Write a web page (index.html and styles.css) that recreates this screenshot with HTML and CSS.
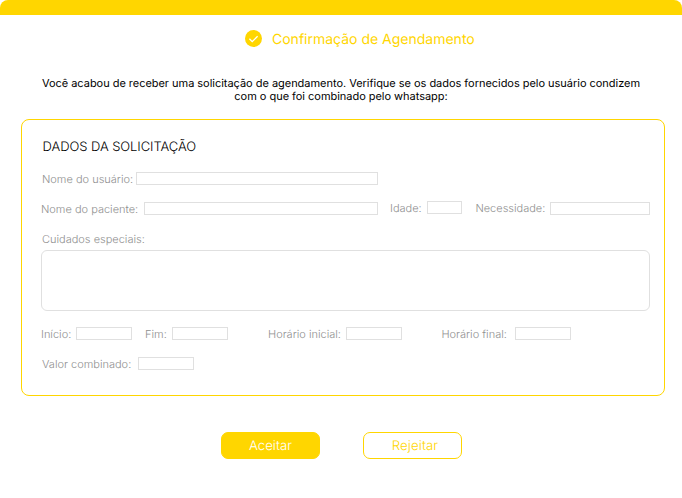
FILE: index.html
```html
<!DOCTYPE html>
<html lang="pt-BR">
<head>
<meta charset="utf-8">
<title>Confirmação de Agendamento</title>
<link rel="stylesheet" href="styles.css">
</head>
<body>
<main class="modal">
  <div class="topbar"></div>
  <header class="heading">
    <svg class="check" viewBox="0 0 17 17" aria-hidden="true">
      <circle cx="8.5" cy="8.5" r="8.5" fill="#ffd600"/>
      <path d="M4.4 8.8l2.8 2.8 5.4-5.4" fill="none" stroke="#fff" stroke-width="1.3"/>
    </svg>
    <h1 class="title">Confirmação de Agendamento</h1>
  </header>
  <p class="intro">Você acabou de receber uma solicitação de agendamento. Verifique se os dados fornecidos pelo usuário condizem<br>com o que foi combinado pelo whatsapp:</p>
  <section class="card">
    <h2 class="card-title">DADOS DA SOLICITAÇÃO</h2>
    <div class="row row-user">
      <span class="label">Nome do usuário:</span><span class="box"></span>
    </div>
    <div class="row row-patient">
      <span class="label">Nome do paciente:</span><span class="box"></span>
      <span class="label raised">Idade:</span><span class="box raised"></span>
      <span class="label raised">Necessidade:</span><span class="box"></span>
    </div>
    <div class="row row-care"><span class="label">Cuidados especiais:</span></div>
    <div class="area"></div>
    <div class="row row-dates">
      <span class="label">Início:</span><span class="box"></span>
      <span class="label">Fim:</span><span class="box"></span>
      <span class="label">Horário inicial:</span><span class="box"></span>
      <span class="label">Horário final:</span><span class="box"></span>
    </div>
    <div class="row row-value">
      <span class="label">Valor combinado:</span><span class="box"></span>
    </div>
  </section>
  <div class="actions">
    <button class="btn btn-accept">Aceitar</button>
    <button class="btn btn-reject">Rejeitar</button>
  </div>
</main>
</body>
</html>
```
FILE: styles.css
```css
* { box-sizing: border-box; }
body {
  margin: 0;
  background: #fff;
  font-family: Inter, "Liberation Sans", sans-serif;
  text-rendering: geometricPrecision;
}
.modal { width: 682px; height: 498px; overflow: hidden; }
.topbar { height: 15px; background: #ffd600; border-radius: 8px 8px 0 0; }
.heading {
  display: flex;
  align-items: center;
  gap: 10px;
  height: 17px;
  margin: 15px 0 0 245px;
}
.check { width: 17px; height: 17px; }
.title {
  margin: 0;
  padding-top: 2px;
  font-size: 14px;
  font-weight: 400;
  line-height: 17px;
  color: #ffd600;
  white-space: nowrap;
}
.intro {
  margin: 30px 0 0;
  font-size: 11px;
  line-height: 13px;
  letter-spacing: -0.03px;
  text-align: center;
  white-space: nowrap;
  color: #000;
}
.card {
  width: 644px;
  height: 277px;
  margin: 16px 0 0 21px;
  padding: 19px 14px 0 19px;
  border: 1px solid #ffd600;
  border-radius: 8px;
}
.card-title {
  margin: 0 0 16px 1.6px;
  font-size: 13px;
  font-weight: 300;
  line-height: 17px;
  letter-spacing: -0.07px;
  color: #000;
}
.row { display: grid; height: 13px; margin-bottom: 17px; }
.label {
  font-size: 11px;
  font-weight: 300;
  line-height: 14px;
  white-space: nowrap;
  color: #8f8f8f;
}
.box { height: 13px; border: 1px solid #e0e0e0; }
.raised { margin-top: -1px; }
.row-user { grid-template-columns: 95px 242px; }
.row-patient { grid-template-columns: 103px 234px 49px 35px 88px 100px; }
.row-patient .label:nth-child(3) { padding-left: 12px; }
.row-patient .label:nth-child(5) { padding-left: 13.4px; }
.row-care { margin-bottom: 5px; }
.area { height: 61px; border: 1px solid #e0e0e0; border-radius: 6px; margin-bottom: 16px; }
.row-dates { grid-template-columns: 35px 56px 40px 56px 118px 56px 113px 56px; }
.row-dates .label:nth-child(3) { padding-left: 13px; }
.row-dates .label:nth-child(5) { padding-left: 40px; }
.row-dates .label:nth-child(7) { padding-left: 39.4px; }
.row-value { grid-template-columns: 97px 56px; }
.row-user .label, .row-care .label, .row-value .label { padding-left: 1px; }
.actions { display: flex; gap: 43px; margin: 36px 0 0 221px; }
.btn {
  width: 99px;
  height: 27px;
  padding: 2px 0 0;
  border: 1px solid #ffd600;
  border-radius: 7px;
  font: 300 13.2px/23px Inter, "Liberation Sans", sans-serif;
  text-rendering: inherit;
}
.btn-accept { background: #ffd600; color: #fff; }
.btn-reject { background: #fff; color: #ffd600; padding-left: 5px; letter-spacing: 0.1px; }
```
